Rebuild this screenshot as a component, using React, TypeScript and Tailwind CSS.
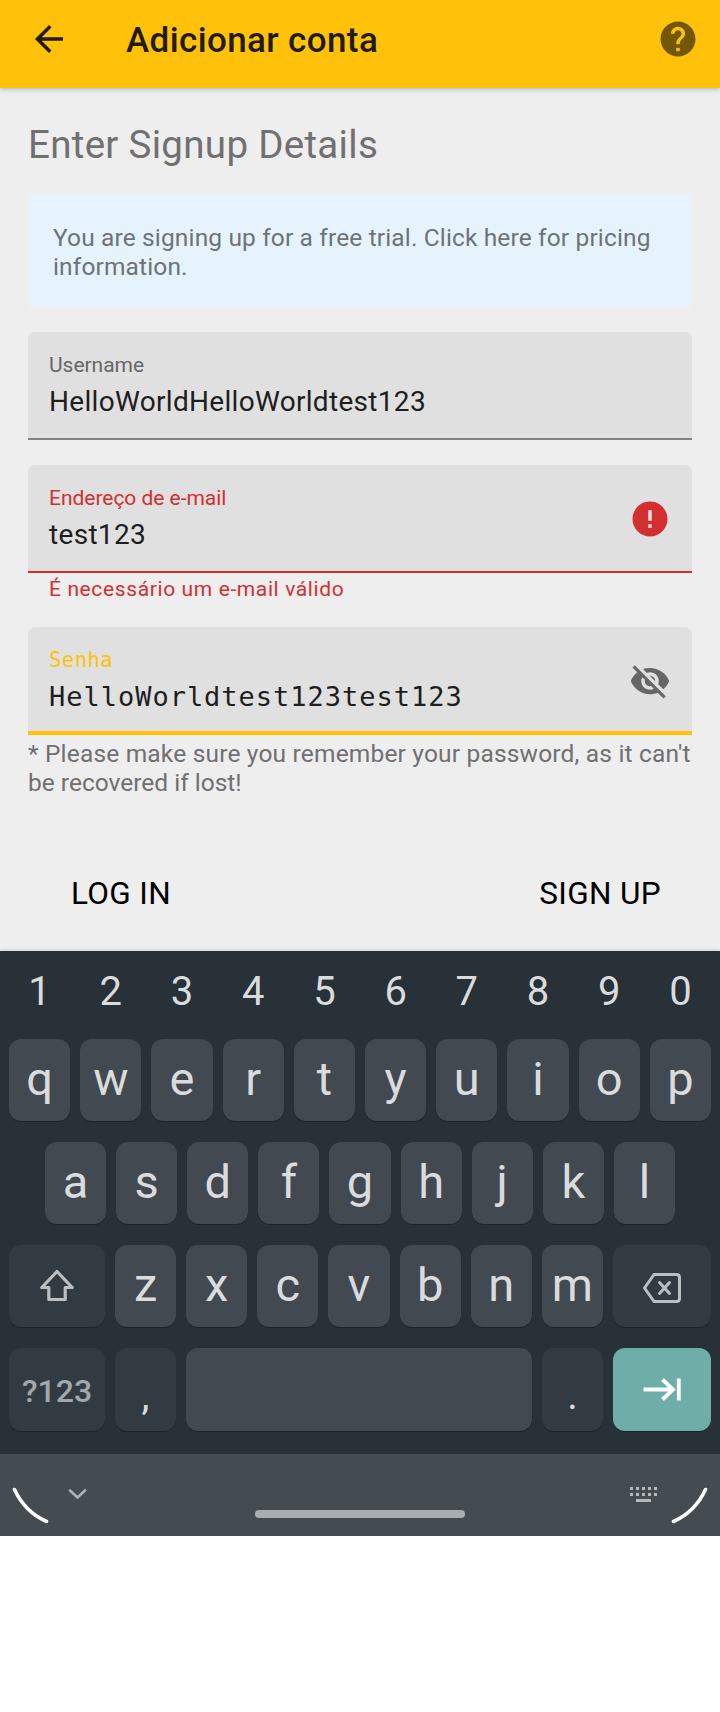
import type { ReactNode } from "react";

function Field({
  label,
  value,
  tone,
  line,
  mono,
  icon,
}: {
  label: string;
  value: string;
  tone: string;
  line: string;
  mono?: boolean;
  icon?: ReactNode;
}) {
  const family = mono
    ? "font-['DejaVu_Sans_Mono',monospace]"
    : "font-[Roboto,sans-serif]";
  return (
    <div className="relative flex h-[108px] items-center justify-between rounded-t-[7px] bg-[#e0e0e0] pr-[21px] pl-[21px]">
      <div className={"flex h-full flex-col pt-5 " + family}>
        <div className={(mono ? "text-[20.5px] tracking-[0.5px] " : "text-[21px] tracking-[-0.03px] ") + "leading-[26px] " + tone}>
          {label}
        </div>
        <div
          className={
            (mono ? "text-[27px] tracking-[0.98px] " : "text-[28px] tracking-[0.31px] ") +
            "mt-[6px] leading-[36px] text-[#1e1e1e]"
          }
        >
          {value}
        </div>
      </div>
      {icon}
      <div className={"absolute inset-x-0 bottom-0 " + line} />
    </div>
  );
}

function Key({ children, className }: { children?: ReactNode; className?: string }) {
  return (
    <div
      className={
        "flex items-center justify-center rounded-[12px] shadow-[0_1px_0_#1b2328] " +
        (className ?? "flex-1 bg-[#424950] pb-1")
      }
    >
      {children}
    </div>
  );
}

const letters = (s: string) => s.split("").map((c) => <Key key={c}>{c}</Key>);

export default function App() {
  return (
    <div className="flex h-[1712px] w-[720px] flex-col bg-white font-[Roboto,sans-serif]">
      <header className="z-10 flex h-[88px] shrink-0 items-center bg-[#ffc109] pr-[21px] pb-[10px] pl-[28px] shadow-[0_1px_5px_rgba(0,0,0,0.25)]">
        <svg viewBox="0 0 24 24" className="size-[42px] fill-[#211a04]">
          <path d="M20 11H7.83l5.59-5.59L12 4l-8 8 8 8 1.41-1.41L7.83 13H20v-2z" />
        </svg>
        <h1 className="ml-[56px] flex-1 pt-1 text-[35px] leading-[42px] font-medium tracking-[0.38px] text-[#211a04]">Adicionar conta</h1>
        <svg viewBox="0 0 24 24" className="size-[42px] fill-[#735704]">
          <path d="M12 2C6.48 2 2 6.48 2 12s4.48 10 10 10 10-4.48 10-10S17.52 2 12 2zm1 17h-2v-2h2v2zm2.07-7.75l-.9.92C13.45 12.9 13 13.5 13 15h-2v-.5c0-1.1.45-2.1 1.17-2.83l1.24-1.26c.37-.36.59-.86.59-1.41 0-1.1-.9-2-2-2s-2 .9-2 2H8c0-2.21 1.79-4 4-4s4 1.79 4 4c0 .88-.36 1.68-.93 2.25z" />
        </svg>
      </header>

      <main className="flex h-[863px] shrink-0 flex-col bg-[#eeeeee] px-7">
        <h2 className="mt-[34px] text-[38.5px] leading-[46px] tracking-[0.3px] text-[#707070]">Enter Signup Details</h2>
        <div className="mt-[26px] h-[113px] rounded-[3px] bg-[#e6f3fd] pt-[29px] pl-[25px] text-[24.5px] leading-[29px] tracking-[0.14px] text-[#6d7376]">
          You are signing up for a free trial. Click here for pricing information.
        </div>
        <div className="mt-[25px]">
          <Field label="Username" value="HelloWorldHelloWorldtest123" tone="text-[#666666]" line="h-[2px] bg-[#828282]" />
        </div>
        <div className="mt-[25px]">
          <Field
            label="Endereço de e-mail"
            value="test123"
            tone="text-[#d32f2f]"
            line="h-[2px] bg-[#d32f2f]"
            icon={
              <svg viewBox="0 0 24 24" className="size-[42px] fill-[#d32f2f]">
                <path d="M12 2C6.48 2 2 6.48 2 12s4.48 10 10 10 10-4.48 10-10S17.52 2 12 2zm1 15h-2v-2h2v2zm0-4h-2V7h2v6z" />
              </svg>
            }
          />
        </div>
        <div className="h-[54px] pt-[3px] pl-[21px] text-[21px] leading-[26px] tracking-[0.62px] text-[#d32f2f]">
          É necessário um e-mail válido
        </div>
        <Field
          mono
          label="Senha"
          value="HelloWorldtest123test123"
          tone="text-[#ffc109]"
          line="h-[4px] bg-[#ffc109]"
          icon={
            <svg viewBox="0 0 24 24" className="size-[42px] fill-[#666666]">
              <path d="M12 7c2.76 0 5 2.24 5 5 0 .65-.13 1.26-.36 1.83l2.92 2.92c1.51-1.26 2.7-2.89 3.43-4.75-1.73-4.39-6-7.5-11-7.5-1.4 0-2.74.25-3.98.7l2.16 2.16C10.74 7.13 11.35 7 12 7zM2 4.27l2.28 2.28.46.46C3.08 8.3 1.78 10.02 1 12c1.73 4.39 6 7.5 11 7.5 1.55 0 3.03-.3 4.38-.84l.42.42L19.73 22 21 20.73 3.27 3 2 4.27zM7.53 9.8l1.55 1.55c-.05.21-.08.43-.08.65 0 1.66 1.34 3 3 3 .22 0 .44-.03.65-.08l1.55 1.55c-.67.33-1.41.53-2.2.53-2.76 0-5-2.24-5-5 0-.79.2-1.53.53-2.2zm4.31-.78l3.15 3.15.02-.16c0-1.66-1.34-3-3-3l-.17.01z" />
            </svg>
          }
        />
        <p className="-mr-2 pt-1 text-[24.5px] leading-[29px] text-[#707070]">
          <span className="tracking-[0.18px]">* Please make sure you remember your password, as it can't</span>
          <br />
          be recovered if lost!
        </p>
        <div className="mt-[78px] flex justify-between pr-[31px] pl-[43px] text-[31.5px] leading-[38px] tracking-[0.35px] text-black">
          <span>LOG IN</span>
          <span>SIGN UP</span>
        </div>
      </main>

      <section className="flex h-[503px] shrink-0 flex-col bg-[#273137] px-[9px] text-[47px] leading-none text-[#d9dbdd] shadow-[0_-1px_4px_rgba(0,0,0,0.12)]">
        <div className="flex h-[88px] gap-[10px] pb-[7px] text-[40px]">
          {"1234567890".split("").map((n) => (
            <div key={n} className="flex flex-1 items-center justify-center">{n}</div>
          ))}
        </div>
        <div className="flex h-[82px] gap-[10px]">{letters("qwertyuiop")}</div>
        <div className="mt-[21px] flex h-[82px] gap-[10px] px-9">{letters("asdfghjkl")}</div>
        <div className="mt-[21px] flex h-[82px] gap-[10px]">
          <Key className="w-[96px] bg-[#313b41]">
            <svg viewBox="0 0 36 36" className="size-9 fill-none stroke-[#bcbfc1] stroke-[3.2]" strokeLinejoin="round">
              <path d="M18 3.5 2.8 19.5H9.8V31.5H26.2V19.5H33.2Z" />
            </svg>
          </Key>
          {letters("zxcvbnm")}
          <Key className="w-[98px] bg-[#313b41] pt-1">
            <svg viewBox="0 0 40 32" className="h-8 w-10 fill-none stroke-[#bcbfc1] stroke-[3]" strokeLinejoin="round" strokeLinecap="round">
              <path d="M12 2.5H34.5Q37.5 2.5 37.5 5.5V26.5Q37.5 29.5 34.5 29.5H12L2.5 16ZM17.500 10.500 27.500 21.500M27.500 10.500 17.500 21.500" />
            </svg>
          </Key>
        </div>
        <div className="mt-[21px] flex h-[83px] gap-[10px]">
          <Key className="w-[96px] bg-[#313b41] pt-[3px] text-[32px] font-medium text-[#a3a8ab]">?123</Key>
          <Key className="w-[61px] bg-[#313b41] pt-3 text-[40px]">,</Key>
          <Key className="flex-1 bg-[#424950]" />
          <Key className="w-[61px] bg-[#313b41] pt-3 text-[40px]">.</Key>
          <Key className="w-[98px] bg-[#6fada8]">
            <svg viewBox="0 0 40 24" className="h-6 w-10 fill-none stroke-white stroke-[3.8]">
              <path d="M1.5 11.500H31M20.5 1.500 31 11.500 20.5 21.500M36.8 .5V22.500" />
            </svg>
          </Key>
        </div>
      </section>

      <nav className="flex h-[82px] shrink-0 items-start bg-[#444c51]">
        <svg viewBox="0 0 720 82" className="h-[82px] w-[720px] fill-none" strokeLinecap="round">
          <path d="M14.5 35.5Q25 58 46.5 67.5M705.5 35.5Q695 58 673.5 67.5" className="stroke-white stroke-[3.6]" />
          <path d="M70 36.500 77.500 43.500 85 36.500" className="stroke-[#aeb2b4] stroke-[2.6]" />
          <rect x="255" y="56" width="210" height="8" rx="4" className="fill-[#a9adb0]" />
          <g className="fill-[#b4b8ba]">
            {[630, 636, 642, 648, 654].map((x) => (
              <g key={x}>
                <rect x={x} y="33" width="3" height="3" />
                <rect x={x} y="39" width="3" height="3" />
              </g>
            ))}
            <rect x="636" y="45" width="15" height="3" />
          </g>
        </svg>
      </nav>
    </div>
  );
}
